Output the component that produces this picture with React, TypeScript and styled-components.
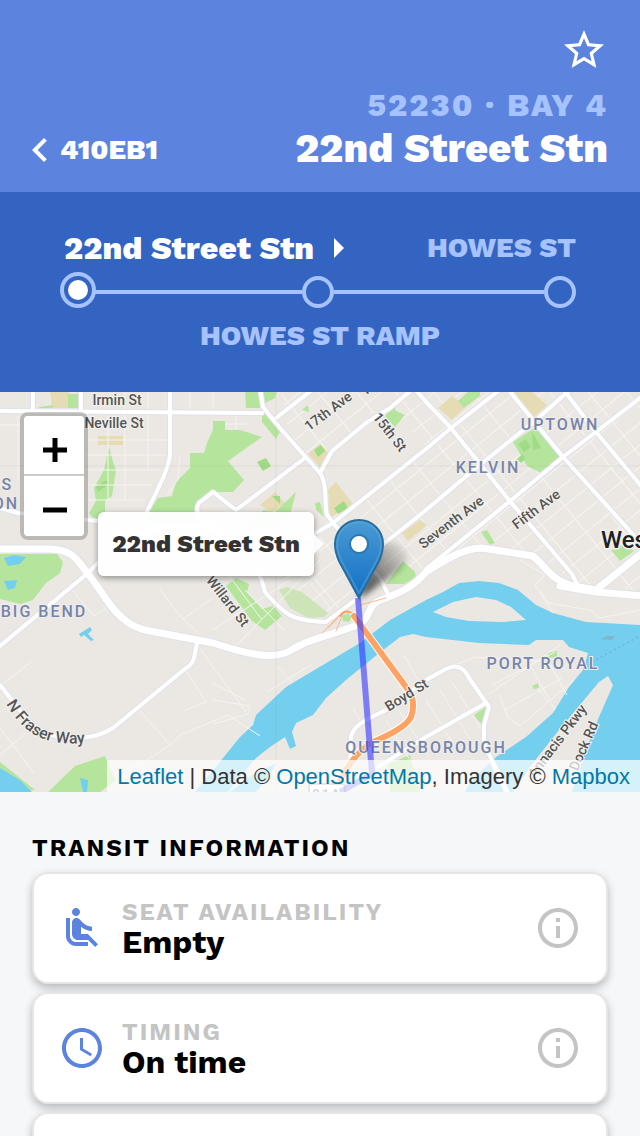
import React from "react";
import styled, { createGlobalStyle } from "styled-components";
import {
  MdAccessTime,
  MdAirlineSeatReclineNormal,
  MdInfoOutline,
  MdStarBorder,
} from "react-icons/md";

const GlobalStyle = createGlobalStyle`
  * { box-sizing: border-box; }
  body {
    margin: 0;
    background: #f5f7f9;
    font-family: "Work Sans", Inter, "Liberation Sans", sans-serif;
  }
  h1, h2, p, dl, dt, dd { margin: 0; padding: 0; }
  button { border: 0; padding: 0; background: none; color: inherit; cursor: pointer; }
`;

const Screen = styled.div`
  height: 100vh;
  display: flex;
  flex-direction: column;
  overflow: hidden;
`;

const Header = styled.header`
  flex: none;
  height: 192px;
  padding: 26px 32px 20px;
  display: flex;
  align-items: flex-end;
  justify-content: space-between;
  background: #5c83dd;
  color: #fff;
`;

const BackLink = styled.a`
  display: flex;
  align-items: center;
  gap: 12px;
  color: inherit;
  text-decoration: none;
  font-size: 28px;
  line-height: 44px;
  font-weight: 800;
`;

const StopHeading = styled.div`
  display: flex;
  flex-direction: column;
  align-items: flex-end;
`;

const FavouriteButton = styled.button`
  height: 48px;
  margin-bottom: 10px;
  font-size: 48px;
  line-height: 0;
`;

const StopMeta = styled.p`
  font-size: 32px;
  line-height: 42px;
  font-weight: 800;
  letter-spacing: 2px;
  color: #a6c2ff;
`;

const StopName = styled.h1`
  font-size: 40px;
  line-height: 46px;
  font-weight: 800;
`;

const Route = styled.nav`
  flex: none;
  height: 200px;
  padding: 36px 64px 0 60px;
  background: #3464c1;
  color: #a6c2ff;
`;

const RouteLabels = styled.div<{ $centered?: boolean }>`
  display: flex;
  align-items: center;
  justify-content: ${(p) => (p.$centered ? "center" : "space-between")};
  height: 40px;
  padding-left: 4px;
  font-size: 28px;
  line-height: 40px;
  font-weight: 800;
`;

const CurrentStop = styled.span`
  display: flex;
  align-items: center;
  gap: 20px;
  color: #fff;
  font-size: 32px;
`;

const Track = styled.div`
  display: flex;
  align-items: flex-end;
  height: 36px;
  margin: 4px 0 8px;
`;

const Segment = styled.span`
  flex: 1;
  height: 4px;
  margin-bottom: 14px;
  background: #a6c2ff;
`;

const StopDot = styled.span<{ $active?: boolean }>`
  display: flex;
  align-items: center;
  justify-content: center;
  width: ${(p) => (p.$active ? 36 : 32)}px;
  height: ${(p) => (p.$active ? 36 : 32)}px;
  margin-right: ${(p) => (p.$active ? -4 : 0)}px;
  border: 4px solid #a6c2ff;
  border-radius: 50%;
  &::after {
    content: "";
    width: 20px;
    height: 20px;
    border-radius: 50%;
    background: ${(p) => (p.$active ? "#fff" : "transparent")};
  }
`;

const MapPanel = styled.section`
  flex: none;
  position: relative;
  height: 400px;
  overflow: hidden;
  background: #ebe8e3;
`;

const MapDrawing = styled.svg`
  display: block;
  width: 100%;
  height: 100%;
  font-family: Roboto, sans-serif;
`;

const ZoomControl = styled.div`
  position: absolute;
  left: 20px;
  top: 20px;
  border: 4px solid rgba(0, 0, 0, 0.2);
  border-radius: 8px;
  background-clip: padding-box;
`;

const ZoomButton = styled.button`
  display: flex;
  align-items: center;
  justify-content: center;
  width: 60px;
  height: 60px;
  background: #fff;
  border-radius: 0 0 4px 4px;
  &:first-child {
    border-bottom: 2px solid #ccc;
    border-radius: 4px 4px 0 0;
  }
`;

const Tooltip = styled.div`
  position: absolute;
  left: 98px;
  top: 120px;
  width: 216px;
  height: 64px;
  display: flex;
  align-items: center;
  justify-content: center;
  border-radius: 6px;
  background: rgba(255, 255, 255, 0.95);
  box-shadow: 0 2px 6px rgba(0, 0, 0, 0.4);
  color: #333;
  font-size: 24px;
  font-weight: 800;
  white-space: nowrap;
  &::after {
    content: "";
    position: absolute;
    left: 100%;
    top: 22px;
    border: 10px solid transparent;
    border-left-color: rgba(255, 255, 255, 0.9);
    border-right-width: 0;
  }
`;

const Attribution = styled.p`
  position: absolute;
  right: 0;
  bottom: 0;
  height: 32px;
  padding: 0 10px;
  background: rgba(255, 255, 255, 0.7);
  color: #333;
  font-family: "Helvetica Neue", "Liberation Sans", Arial, sans-serif;
  font-size: 22px;
  line-height: 34px;
  white-space: nowrap;
  a { color: #0078a8; text-decoration: none; }
`;

const Info = styled.main`
  flex: 1;
  min-height: 0;
  overflow-y: auto;
  scrollbar-width: none;
  padding: 40px 32px 32px;
`;

const InfoTitle = styled.h2`
  margin-bottom: 8px;
  font-size: 24px;
  line-height: 32px;
  font-weight: 700;
  letter-spacing: 2px;
  color: #000;
`;

const CardList = styled.div`
  display: flex;
  flex-direction: column;
  gap: 8px;
`;

const Card = styled.article`
  flex: none;
  display: flex;
  align-items: center;
  gap: 16px;
  height: 112px;
  padding: 0 24px;
  border: 2px solid #e6e6e6;
  border-radius: 16px;
  background: #fff;
  box-shadow: 0 4px 8px rgba(0, 0, 0, 0.25);
`;

const CardIcon = styled.span`
  color: #5c83dd;
  font-size: 48px;
  line-height: 0;
`;

const CardText = styled.dl`
  flex: 1;
`;

const CardLabel = styled.dt`
  font-size: 24px;
  line-height: 28px;
  font-weight: 700;
  letter-spacing: 2px;
  color: #c4c4c4;
`;

const CardValue = styled.dd`
  font-size: 32px;
  line-height: 32px;
  font-weight: 700;
  color: #000;
`;

const InfoButton = styled.button`
  color: #c4c4c4;
  font-size: 48px;
  line-height: 0;
`;

const majorRoads = [
  "M0 411L262 413",
  "M33 390V411M81 390V411",
  "M170 390V455C168 470 160 485 145 515L88 573L0 646",
  "M0 508L18 513L98 521L144 546",
  "M426 569L509 502L563 457L596 432L644 395",
  "M300 542L333 523L426 449L451 428L502 388",
  "M376 550L426 510L476 468L536 420L572 388",
  "M426 402L451 428L509 500L572 574L579 588",
  "M507 388L563 457L629 530L642 546",
  "M562 388L596 432L642 487",
  "M260 388L263 407L280 428L320 473C328 485 324 505 327 515L338 529L380 578L388 594",
  "M276 418L312 390",
  "M320 473L332 451L366 423L390 408L414 388L428 404",
  "M305 458L236 510L213 492L199 503C192 515 206 522 216 527",
  "M120 545C150 524 190 520 226 533C246 545 260 570 265 592C285 615 292 621 326 622L358 598",
  "M197 643L194 658Q192 665 186 668L113 728Q102 735 88 737C60 742 36 733 22 713L0 685",
  "M350 765L351 737C354 724 366 720 386 710L426 680L446 669C460 662 466 672 469 678L489 707L484 725V743L493 763L508 794",
  "M486 703L426 737L378 767",
];

const arterials = [
  "M0 549H48C76 549 78 563 92 579C106 597 119 627 150 631L213 643C250 655 276 661 293 649C310 638 330 636 360 624C373 615 365 604 386 598C404 591 414 586 426 572C446 560 460 549 482 548L533 556C547 568 551 580 573 586L596 590L642 553",
  "M560 586L596 592L642 596",
];

const minorRoads = [
  "M148 390V470M125 390V500M108 416V500M86 440H166M86 455H166M86 470H160M86 485H152M86 500H145M18 416V480M0 425H20",
  "M213 390V411M190 390V411M236 416V430M225 424H250M180 455L178 480L165 497",
  "M0 686L31 662M0 728L34 773M0 755L26 733M140 711L170 745L142 763L112 775M170 745L180 735L228 715L260 736M186 671L206 702L184 711",
  "M160 590L183 619L213 598M183 619L200 635M72 590L94 616L108 607M200 649L246 712M213 683L245 700M276 665L292 682M267 692L312 664M213 700L250 706L248 714L214 724",
  "M213 630L290 580M232 650L320 560M245 590L284 630M292 560L332 610M225 570L262 620",
  "M455 665L475 657L540 661M489 694L560 645M492 685L555 652M505 710L562 678M520 726L574 680M500 695L508 718L520 726M527 660L555 710M545 655L567 695M538 688L548 702",
  "M426 700L455 747M440 690L470 739M452 682L482 731M400 712L430 758M386 720L410 760M404 655L418 680M353 708L363 725",
  "M540 590L548 603L590 610L600 618L640 610M553 613L535 585L545 575L520 560",
];

const parks = [
  "M39 407L53 405V408H39ZM68 394H78V408H68Z",
  "M109 446L113 462L116 470L112 496L105 501V515L94 520L89 513L96 501L94 488L104 470Z",
  "M213 421H225V430H240L262 437L228 461L244 480L233 492L216 492L198 503L197 521H143L158 498L172 496L176 482L190 468V453H204L207 443L213 430Z",
  "M296 492L290 515L272 530L246 524L264 510L275 512Z",
  "M245 390H262V408H246ZM262 390L277 390L275 398L265 403ZM262 412L282 428L276 439L262 422Z",
  "M0 554H57L63 562L60 573L46 583L33 600L20 604L0 599Z",
  "M226 586L236 578L249 584L247 592L262 609L273 606L282 616L265 630L252 621Z",
  "M315 503L320 502L324 517L316 510Z",
  "M513 442L536 427L560 456L541 473L527 466Z",
  "M458 401L470 390H480V396L464 408Z",
  "M385 416L394 406L396 411L405 415L395 427Z",
  "M386 584L403 561L415 572L416 577L404 584Z",
  "M481 532L487 530L495 543L490 545Z",
  "M611 550L625 545L634 551L620 561Z",
  "M48 792L75 766L105 756L116 780L100 792ZM0 762L35 790L0 792Z",
  "M474 715L487 706L488 712L482 725Z",
  "M547 653L557 651V657L549 658ZM532 686L538 683L539 688L534 689Z",
  "M388 764L410 755L420 792H390Z",
  "M302 410L308 405L309 412Z",
];

const sandAreas = [
  "M50 391H68L76 408H52Z",
  "M98 436H123V445H98Z",
  "M308 454L320 444L328 452L320 467Z",
  "M328 490L336 482L353 504L330 518Z",
  "M438 408L452 396L466 406L452 420Z",
  "M514 392H532L547 405L534 417Z",
  "M260 505L275 492L285 503L272 512Z",
  "M402 533L420 520L427 525L408 541Z",
];

const districts: [string, number, number][] = [
  ["UPTOWN", 560, 430],
  ["KELVIN", 488, 473],
  ["BIG BEND", 44, 617],
  ["PORT ROYAL", 543, 669],
  ["QUEENSBOROUGH", 426, 753],
  ["'S", 5, 490],
  ["ON", 6, 509],
];

const streets: [string, number, number, number][] = [
  ["Irmin St", 117, 405, 0],
  ["Neville St", 114, 428, 0],
  ["17th Ave", 331, 415, -37],
  ["16th", 376, 388, -37],
  ["15th St", 386, 435, 52],
  ["Seventh Ave", 454, 526, -37],
  ["Fifth Ave", 539, 513, -37],
  ["Willard St", 224, 604, 52],
  ["Boyd St", 409, 699, -32],
  ["Annacis Pkwy", 561, 744, -53],
  ["Dock Rd", 588, 748, -66],
];

function StreetMap() {
  return (
    <MapDrawing viewBox="0 392 640 400" preserveAspectRatio="xMidYMid slice" role="img" aria-label="Map around 22nd Street Stn">
      <defs>
        <pattern id="blocks" width="30" height="17" patternUnits="userSpaceOnUse" patternTransform="rotate(-39)">
          <path d="M0 0H30M0 0V17" stroke="#f6f4f1" strokeWidth="2" fill="none" />
        </pattern>
        <linearGradient id="pin" x1="0" y1="0" x2="0" y2="1">
          <stop offset="0" stopColor="#4a9bd3" />
          <stop offset="1" stopColor="#126fc6" />
        </linearGradient>
        <linearGradient id="pinShadow" x1="0" y1="1" x2="1" y2="0">
          <stop offset="0" stopColor="#000" stopOpacity="0.8" />
          <stop offset="1" stopColor="#000" stopOpacity="0" />
        </linearGradient>
        <filter id="soft" x="-30%" y="-30%" width="160%" height="160%">
          <feGaussianBlur stdDeviation="3" />
        </filter>
        <path id="fraserWay" d="M6 704C22 731 43 749 92 742" />
      </defs>
      <rect y="392" width="640" height="400" fill="#ebe8e3" />
      <path d="M282 392H640V590L575 583L540 557L480 548L426 570L385 590L325 530L325 480L290 440Z" fill="url(#blocks)" />
      <path d="M332 452L366 424L390 408L426 449L350 508L328 480Z" fill="#ebe8e3" />
      <path d="M270 540L330 530L368 580L350 607L320 616L298 614Z" fill="url(#blocks)" />
      {sandAreas.map((d) => <path key={d} d={d} fill="#e5dcb4" />)}
      {parks.map((d) => <path key={d} d={d} fill="#b5e59c" />)}
      <path d="M279 590L287 587L302 592L328 613L324 617L308 618L290 608Z" fill="#cde4b9" />
      <path d="M96 487L106 480L109 484L98 492ZM314 450L321 445L325 451L318 457ZM532 432L541 448L533 450ZM518 444L526 439L531 447L524 452ZM517 459L523 454L525 459L521 463ZM334 508L344 501L348 508L338 514ZM257 462L266 458L271 466L263 471ZM272 496L280 496L280 504Z" fill="#9fdc85" />
      <g fill="#74cfef">
        <path d="M195 792L223 758L240 737L253 725L256 715L286 687L343 653L360 643L390 620L426 600L443 592L459 583L479 581L499 583L518 590L536 605L553 613L586 622L640 625V792H465L470 782L496 757L526 737L553 713L569 687L583 670L588 653L569 647L563 640H536L529 645L479 643L426 637L413 634L400 637L373 658L346 680L326 698L313 715L296 723L292 732L296 746L290 749L285 737L270 747L256 758L228 792Z" />
        <path d="M0 768L20 780L32 792H0ZM4 558L14 555L26 557L20 564L8 566ZM4 581L17 580L15 588L8 590ZM79 634L90 627L92 630L88 634L94 640L91 641L84 635L81 637ZM80 778L88 780L87 792H83ZM230 792L252 775L275 764L270 776L256 792Z" />
      </g>
      <path d="M433 612L453 602L476 597L496 600L511 607L526 620L503 622L469 621L446 617Z" fill="#ebe8e3" />
      <path d="M513 792L533 763L559 730L599 682L608 676L613 685L599 717L583 757L572 792Z" fill="#ebe8e3" />
      <path d="M592 662L640 636" fill="none" stroke="#6aa5dc" strokeDasharray="2 3" />
      <path d="M600 639L607 636H615L612 640Z" fill="#7fb4cb" />
      {minorRoads.map((d) => <path key={d} d={d} fill="none" stroke="#f6f4f1" strokeWidth="1" />)}
      <g fill="none" strokeLinecap="round" strokeLinejoin="round">
        {majorRoads.map((d) => <path key={d} d={d} stroke="#e0e1ea" strokeWidth="6" />)}
        {arterials.map((d) => <path key={d} d={d} stroke="#e0e1ea" strokeWidth="9" />)}
        {majorRoads.map((d) => <path key={d} d={d} stroke="#fff" strokeWidth="4" />)}
        {arterials.map((d) => <path key={d} d={d} stroke="#fff" strokeWidth="7" />)}
        <path d="M322 633L342 613M328 628L338 618M360 605L386 598M336 631L343 614" stroke="#fbb98a" strokeWidth="1" />
        <path d="M340 616Q345 608 353 614" stroke="#ffa364" strokeWidth="2" />
        <path d="M354 616L406 687Q417 700 411 717Q406 728 373 742Q355 752 340 780" stroke="#fff" strokeWidth="8" />
        <path d="M354 616L406 687Q417 700 411 717Q406 728 373 742Q355 752 340 780" stroke="#ffa364" strokeWidth="6" />
      </g>
      <path d="M342 616L348 613L352 617L349 622L343 621Z" fill="#b5e59c" />
      <path d="M0 466H640M276 392V792" stroke="#8c8c8c" strokeOpacity="0.12" />
      <g fill="#7784aa" stroke="#f0eeeb" strokeWidth="2" paintOrder="stroke" fontSize="16" fontWeight="500" letterSpacing="2" textAnchor="middle">
        {districts.map(([name, x, y]) => <text key={name} x={x} y={y}>{name}</text>)}
      </g>
      <g fill="#555" stroke="#f3f1ee" strokeWidth="2" paintOrder="stroke" fontSize="14" fontWeight="500" textAnchor="middle">
        {streets.map(([name, x, y, turn]) => (
          <text key={name} x={x} y={y} transform={`rotate(${turn} ${x} ${y})`}>{name}</text>
        ))}
      </g>
      <text fill="#555" stroke="#f3f1ee" strokeWidth="2" paintOrder="stroke" fontSize="16" fontWeight="500">
        <textPath href="#fraserWay">N Fraser Way</textPath>
      </text>
      <text x="601" y="548" fill="#222" stroke="#f3f1ee" strokeWidth="3" paintOrder="stroke" fontSize="24" fontWeight="500">Wes</text>
      <rect x="309" y="784" width="36" height="20" rx="3" fill="#fff" stroke="#aaa" strokeWidth="2" />
      <text x="327" y="798" fill="#777" fontSize="13" fontWeight="700" letterSpacing="2" textAnchor="middle">91A</text>
      <path d="M358 598L372 774L340 792" fill="none" stroke="#3333ff" strokeOpacity="0.6" strokeWidth="6" strokeLinejoin="round" />
      <path d="M359 599L374 556Q382 536 400 545Q414 554 400 570Z" fill="url(#pinShadow)" filter="url(#soft)" />
      <path d="M359 598L339 561Q335 552 335 544A24 24 0 0 1 383 544Q383 552 379 561Z" fill="url(#pin)" stroke="#286c9e" strokeWidth="2" />
      <path d="M359 593L341 560Q337 552 337 544A22 22 0 0 1 381 544Q381 552 377 560Z" fill="none" stroke="#68afd9" strokeOpacity="0.4" strokeWidth="2" />
      <circle cx="359" cy="544" r="9" fill="#fff" stroke="#2d77ad" strokeWidth="2" />
    </MapDrawing>
  );
}

const details = [
  { label: "SEAT AVAILABILITY", value: "Empty", Icon: MdAirlineSeatReclineNormal },
  { label: "TIMING", value: "On time", Icon: MdAccessTime },
];

export default function App() {
  return (
    <Screen>
      <GlobalStyle />
      <Header>
        <BackLink href="#410EB1">
          <svg width="16" height="24" viewBox="8 6 8 12" fill="currentColor" aria-hidden="true">
            <path d="M15.41 7.41L14 6l-6 6 6 6 1.41-1.41L10.83 12z" />
          </svg>
          410EB1
        </BackLink>
        <StopHeading>
          <FavouriteButton aria-label="Favourite"><MdStarBorder /></FavouriteButton>
          <StopMeta>52230 · BAY 4</StopMeta>
          <StopName>22nd Street Stn</StopName>
        </StopHeading>
      </Header>
      <Route>
        <RouteLabels>
          <CurrentStop>
            22nd Street Stn
            <svg width="10" height="20" viewBox="0 0 5 10" fill="currentColor" aria-hidden="true">
              <path d="M0 10l5-5-5-5z" />
            </svg>
          </CurrentStop>
          <span>HOWES ST</span>
        </RouteLabels>
        <Track>
          <StopDot $active />
          <Segment />
          <StopDot />
          <Segment />
          <StopDot />
        </Track>
        <RouteLabels $centered>HOWES ST RAMP</RouteLabels>
      </Route>
      <MapPanel>
        <StreetMap />
        <ZoomControl>
          <ZoomButton aria-label="Zoom in">
            <svg width="28" height="36" viewBox="0 0 28 36" aria-hidden="true">
              <path d="M15 11V35M3 23H27" stroke="#000" strokeWidth="5" />
            </svg>
          </ZoomButton>
          <ZoomButton aria-label="Zoom out">
            <svg width="28" height="36" viewBox="0 0 28 36" aria-hidden="true">
              <path d="M3 22H27" stroke="#000" strokeWidth="5" />
            </svg>
          </ZoomButton>
        </ZoomControl>
        <Tooltip role="tooltip">22nd Street Stn</Tooltip>
        <Attribution>
          <a href="#leaflet">Leaflet</a> | Data © <a href="#osm">OpenStreetMap</a>, Imagery © <a href="#mapbox">Mapbox</a>
        </Attribution>
      </MapPanel>
      <Info>
        <InfoTitle>TRANSIT INFORMATION</InfoTitle>
        <CardList>
          {details.map(({ label, value, Icon }) => (
            <Card key={label}>
              <CardIcon><Icon /></CardIcon>
              <CardText>
                <CardLabel>{label}</CardLabel>
                <CardValue>{value}</CardValue>
              </CardText>
              <InfoButton aria-label={`About ${label.toLowerCase()}`}><MdInfoOutline /></InfoButton>
            </Card>
          ))}
          <Card />
        </CardList>
      </Info>
    </Screen>
  );
}
